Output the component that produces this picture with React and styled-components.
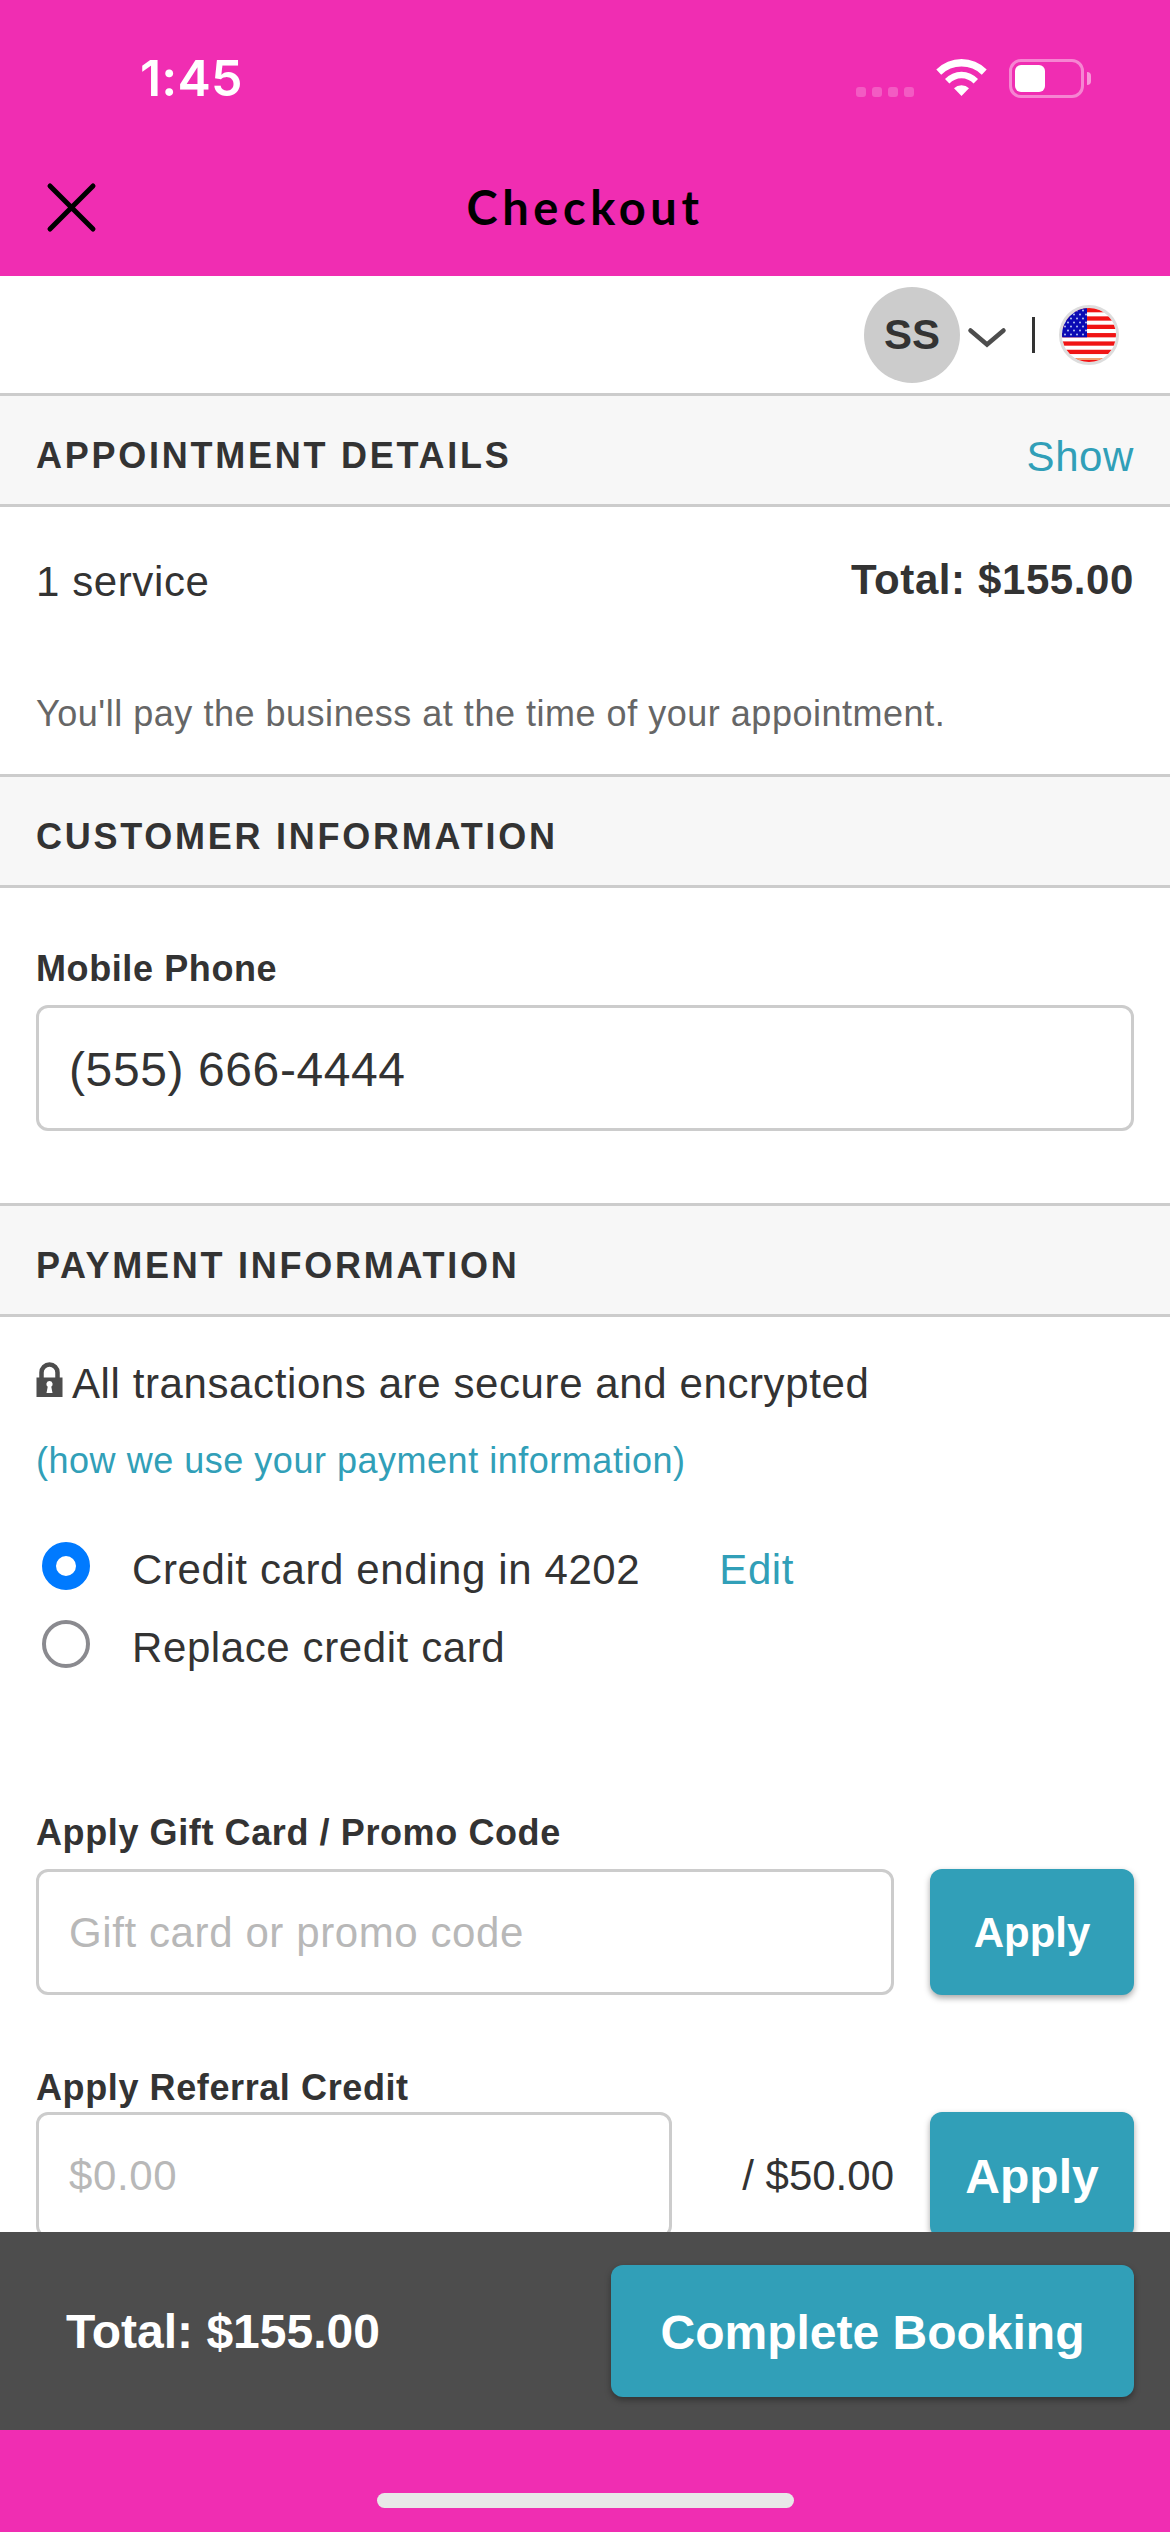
import React, { useState } from "react";
import styled, { createGlobalStyle } from "styled-components";

const GlobalStyle = createGlobalStyle`
  * {
    box-sizing: border-box;
  }

  body {
    margin: 0;
    background-color: #f02db2;
    color: #333;
    font-family: "Liberation Sans", Helvetica, Arial, sans-serif;
    font-size: 42px;
    line-height: 54px;
    letter-spacing: 0.6px;
  }
`;

const Screen = styled.div`
  display: flex;
  flex-direction: column;
  width: 1170px;
  height: 2532px;
  overflow: hidden;
`;

const StatusBar = styled.div`
  display: flex;
  align-items: center;
  justify-content: space-between;
  height: 141px;
  padding: 15px 79px 0 140px;
  color: white;
`;

const Time = styled.span`
  font-family: Inter, sans-serif;
  font-size: 50px;
  font-weight: 600;
  letter-spacing: 0.2px;
`;

const StatusIcons = styled.div`
  display: flex;
  align-items: center;
`;

const Dots = styled.div`
  display: flex;
  gap: 6px;
  margin: 28px 22px 0 0;

  span {
    width: 10px;
    height: 10px;
    border-radius: 3px;
    background-color: rgba(255, 255, 255, 0.22);
  }
`;

const Battery = styled.div`
  width: 75px;
  height: 39px;
  margin: 0 3px 0 22px;
  padding: 3px;
  border: 3px solid rgba(255, 255, 255, 0.42);
  border-radius: 12px;
`;

const BatteryLevel = styled.div`
  width: 30px;
  height: 27px;
  border-radius: 6px;
  background-color: white;
`;

const BatteryCap = styled.div`
  width: 4px;
  height: 13px;
  border-radius: 0 4px 4px 0;
  background-color: rgba(255, 255, 255, 0.5);
`;

const TitleBar = styled.header`
  display: grid;
  grid-template-columns: 100px 1fr 100px;
  align-items: center;
  height: 135px;
  padding: 0 45px;
  color: black;
`;

const CloseButton = styled.button`
  display: flex;
  width: 53px;
  height: 53px;
  margin-bottom: 2px;
  padding: 0;
  border: none;
  background: none;
`;

const Title = styled.h1`
  margin: 0 0 3px;
  font-family: Lato, sans-serif;
  font-size: 47px;
  font-weight: 700;
  letter-spacing: 4.6px;
  text-align: center;
`;

const Content = styled.main`
  flex: 1;
  min-height: 0;
  overflow: hidden;
  background-color: white;
`;

const AccountBar = styled.div`
  display: flex;
  align-items: center;
  justify-content: flex-end;
  height: 117px;
  padding-right: 51px;
`;

const Avatar = styled.div`
  display: flex;
  align-items: center;
  justify-content: center;
  width: 96px;
  height: 96px;
  margin-right: 6px;
  border-radius: 50%;
  background-color: #ccc;
  font-weight: bold;
  letter-spacing: 0;
`;

const Chevron = styled.svg`
  margin-top: 7px;
`;

const Divider = styled.div`
  width: 3px;
  height: 36px;
  margin: 0 24px 0 24px;
  background-color: #333;
`;

const FlagBadge = styled.div`
  display: flex;
  width: 60px;
  height: 60px;
  overflow: hidden;
  border: 3px solid #ddd;
  border-radius: 50%;
`;

const SectionHeader = styled.div`
  display: flex;
  align-items: center;
  justify-content: space-between;
  height: 114px;
  padding: 11px 36px 0;
  border-top: 3px solid #ccc;
  border-bottom: 3px solid #ccc;
  background-color: #f7f7f7;
`;

const SectionTitle = styled.h2`
  margin: 0;
  font-size: 36px;
  letter-spacing: 2.75px;
  text-transform: uppercase;
`;

const Link = styled.a`
  padding-top: ${(props) => (props.$small ? 0 : 2)}px;
  color: #319fb8;
  font-size: ${(props) => (props.$small ? 36 : 42)}px;
  line-height: ${(props) => (props.$small ? 44 : 54)}px;
  letter-spacing: ${(props) => (props.$small ? 0.52 : 0.6)}px;
`;

const Summary = styled.section`
  height: 267px;
  padding: 48px 36px 0;
`;

const SummaryRow = styled.div`
  display: flex;
  align-items: flex-start;
  justify-content: space-between;
`;

const SummaryTotal = styled.strong`
  line-height: 50px;
`;

const Note = styled.p`
  margin: 83px 0 0;
  color: #666;
  font-size: 36px;
  line-height: 44px;
  letter-spacing: 0.52px;
`;

const Section = styled.section`
  padding: ${(props) => props.$padding};
`;

const Label = styled.label`
  display: block;
  margin: 0 0 ${(props) => (props.$tight ? 2 : 14)}px;
  font-size: 36px;
  font-weight: bold;
  line-height: 44px;
`;

const Input = styled.input`
  display: block;
  width: ${(props) => props.$width || "100%"};
  height: 126px;
  padding: 2px 30px 0;
  border: 3px solid #ccc;
  border-radius: 12px;
  background-color: white;
  color: #333;
  font-family: inherit;
  font-size: ${(props) => props.$size || 42}px;
  letter-spacing: inherit;

  &::placeholder {
    color: #b8b8b8;
  }
`;

const SecureRow = styled.div`
  display: flex;
  align-items: center;
  gap: 9px;
  margin-bottom: 28px;

  svg {
    margin-top: -8px;
  }
`;

const RadioList = styled.div`
  margin: 44px 0 128px;
`;

const RadioRow = styled.label`
  display: flex;
  align-items: center;
  height: 78px;
  padding-left: 6px;
`;

const Radio = styled.input`
  appearance: none;
  width: 48px;
  height: 48px;
  margin: 0 42px 0 0;
  border: 4px solid #8a8a8f;
  border-radius: 50%;
  background-color: white;

  &:checked {
    border: 14px solid #007aff;
  }
`;

const RadioText = styled.span`
  padding-top: 7px;
`;

const EditLink = styled(Link)`
  margin-left: 79px;
  padding-top: 7px;
`;

const FieldRow = styled.div`
  display: flex;
  align-items: center;
  gap: 36px;
  margin-bottom: ${(props) => props.$bottom || 0}px;
`;

const Available = styled.span`
  flex: 1;
  padding-top: 2px;
  letter-spacing: 0;
  text-align: right;
`;

const Button = styled.button`
  flex: none;
  width: ${(props) => props.$width}px;
  height: ${(props) => props.$height || 126}px;
  padding: 2px 0 0;
  border: none;
  border-radius: 12px;
  background-color: #319fb8;
  box-shadow: 0 3px 6px rgba(0, 0, 0, 0.35);
  color: white;
  font-family: inherit;
  font-size: ${(props) => props.$size || 48}px;
  font-weight: bold;
`;

const Footer = styled.footer`
  display: flex;
  align-items: center;
  justify-content: space-between;
  height: 198px;
  padding: 0 36px 0 66px;
  background-color: #4d4d4d;
  color: white;
`;

const FooterTotal = styled.strong`
  padding-top: 2px;
  font-size: 48px;
  letter-spacing: 0;
`;

const HomeArea = styled.div`
  display: flex;
  justify-content: center;
  height: 102px;
  padding-top: 63px;
`;

const HomeIndicator = styled.div`
  width: 417px;
  height: 15px;
  border-radius: 8px;
  background-color: #e8e8e8;
`;

const WifiIcon = () => (
  <svg width="51" height="38" viewBox="0 0 51 38" fill="white">
    <path d="M0.3 10.5A35.6 35.6 0 0 1 50.7 10.5L45.8 15.7A29 29 0 0 0 5.2 15.7Z" />
    <path d="M9 20A22.5 22.5 0 0 1 42 20L37.6 24.4A17 17 0 0 0 13.4 24.4Z" />
    <path d="M18 29.2A11 11 0 0 1 33 29.2L25.5 37Z" />
  </svg>
);

const CloseIcon = () => (
  <svg width="53" height="53" viewBox="0 0 53 53">
    <path
      d="M5 5L48 48M48 5L5 48"
      stroke="black"
      strokeWidth="5"
      strokeLinecap="round"
    />
  </svg>
);

const ChevronIcon = () => (
  <Chevron width="42" height="24" viewBox="0 0 42 24" fill="none">
    <path
      d="M4.5 4.5L21 18.5L37.5 4.5"
      stroke="#4d4d4d"
      strokeWidth="4.5"
      strokeLinecap="round"
    />
  </Chevron>
);

const LockIcon = () => (
  <svg width="27" height="36" viewBox="0 0 27 36">
    <path
      d="M5.5 17V10.5a8 8 0 0 1 16 0V17"
      fill="none"
      stroke="#4d4d4d"
      strokeWidth="4.5"
    />
    <path
      fillRule="evenodd"
      fill="#4d4d4d"
      d="M0.5 15.5h26V35h-26zM13.5 19a3.2 3.2 0 0 0-1.8 5.8L10.5 31h6l-1.2-6.2A3.2 3.2 0 0 0 13.5 19z"
    />
  </svg>
);

const stars = [];
for (let row = 0; row < 7; row++) {
  for (let col = 0; col < 4; col++) {
    stars.push({ x: 3 + col * 6 + (row % 2 ? 3 : 0), y: 2.5 + row * 4 });
  }
}

const UsFlag = () => (
  <svg width="54" height="54" viewBox="0 0 54 54">
    <rect width="54" height="54" fill="white" />
    {[0, 1, 2, 3, 4, 5, 6].map((i) => (
      <rect key={i} y={i * 8.35} width="54" height="4.3" fill="#f01414" />
    ))}
    <rect y="50" width="54" height="2" fill="#f0a070" />
    <rect width="25" height="29.3" fill="#0a0ab4" />
    {stars.map(({ x, y }) => (
      <circle key={`${x}-${y}`} cx={x} cy={y} r="1" fill="#b9c6f2" />
    ))}
  </svg>
);

const App = () => {
  const [card, setCard] = useState("saved");

  return (
    <>
      <GlobalStyle />
      <Screen>
        <StatusBar>
          <Time>1:45</Time>
          <StatusIcons>
            <Dots>
              <span />
              <span />
              <span />
              <span />
            </Dots>
            <WifiIcon />
            <Battery>
              <BatteryLevel />
            </Battery>
            <BatteryCap />
          </StatusIcons>
        </StatusBar>

        <TitleBar>
          <CloseButton aria-label="Close">
            <CloseIcon />
          </CloseButton>
          <Title>Checkout</Title>
        </TitleBar>

        <Content>
          <AccountBar>
            <Avatar>SS</Avatar>
            <ChevronIcon />
            <Divider />
            <FlagBadge>
              <UsFlag />
            </FlagBadge>
          </AccountBar>

          <SectionHeader>
            <SectionTitle>Appointment Details</SectionTitle>
            <Link>Show</Link>
          </SectionHeader>
          <Summary>
            <SummaryRow>
              <span>1 service</span>
              <SummaryTotal>Total: $155.00</SummaryTotal>
            </SummaryRow>
            <Note>You'll pay the business at the time of your appointment.</Note>
          </Summary>

          <SectionHeader>
            <SectionTitle>Customer Information</SectionTitle>
          </SectionHeader>
          <Section $padding="59px 36px 72px">
            <Label htmlFor="phone">Mobile Phone</Label>
            <Input id="phone" $size={48} defaultValue="(555) 666-4444" />
          </Section>

          <SectionHeader>
            <SectionTitle>Payment Information</SectionTitle>
          </SectionHeader>
          <Section $padding="40px 36px 0">
            <SecureRow>
              <LockIcon />
              <span>All transactions are secure and encrypted</span>
            </SecureRow>
            <Link as="div" $small>
              (how we use your payment information)
            </Link>

            <RadioList>
              <RadioRow>
                <Radio
                  type="radio"
                  name="card"
                  checked={card === "saved"}
                  onChange={() => setCard("saved")}
                />
                <RadioText>Credit card ending in 4202</RadioText>
                <EditLink>Edit</EditLink>
              </RadioRow>
              <RadioRow>
                <Radio
                  type="radio"
                  name="card"
                  checked={card === "new"}
                  onChange={() => setCard("new")}
                />
                <RadioText>Replace credit card</RadioText>
              </RadioRow>
            </RadioList>

            <Label htmlFor="promo">Apply Gift Card / Promo Code</Label>
            <FieldRow $bottom={71}>
              <Input
                id="promo"
                $width="858px"
                placeholder="Gift card or promo code"
              />
              <Button $width={204} $size={42}>
                Apply
              </Button>
            </FieldRow>

            <Label htmlFor="referral" $tight>
              Apply Referral Credit
            </Label>
            <FieldRow>
              <Input id="referral" $width="636px" placeholder="$0.00" />
              <Available>/ $50.00</Available>
              <Button $width={204}>Apply</Button>
            </FieldRow>
          </Section>
        </Content>

        <Footer>
          <FooterTotal>Total: $155.00</FooterTotal>
          <Button $width={523} $height={132}>
            Complete Booking
          </Button>
        </Footer>
        <HomeArea>
          <HomeIndicator />
        </HomeArea>
      </Screen>
    </>
  );
};

export default App;
